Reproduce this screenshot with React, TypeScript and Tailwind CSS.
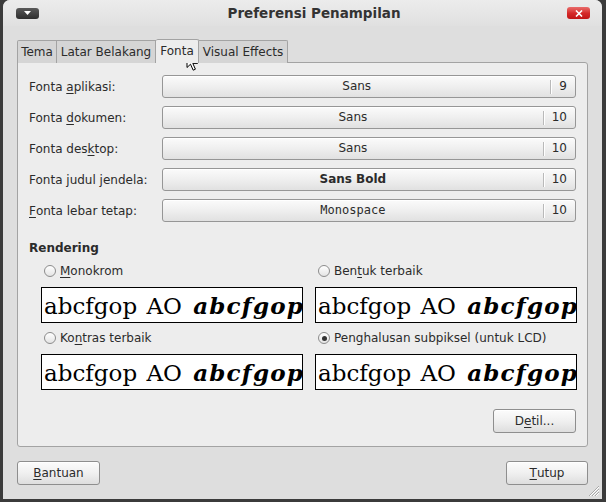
import React from "react";

const sans = "font-['DejaVu_Sans','Liberation_Sans',sans-serif]";

function U({ children }: { children: React.ReactNode }) {
  return <span className="underline decoration-1 underline-offset-[2px]">{children}</span>;
}

function GtkButton({ className = "", children }: { className?: string; children: React.ReactNode }) {
  return (
    <div
      className={`flex items-center justify-center h-[24px] rounded-[3px] border border-[#8e8e8e] bg-gradient-to-b from-[#fcfcfc] via-[#f0f0f0] to-[#dedede] shadow-[inset_0_1px_0_#ffffff] text-[12px] text-[#2b2b2b] ${className}`}
    >
      {children}
    </div>
  );
}

function FontButton({ name, size, nameClass = "" }: { name: string; size: string; nameClass?: string }) {
  return (
    <div className="flex items-center h-[23px] rounded-[3px] border border-[#969696] bg-gradient-to-b from-[#fbfbfb] via-[#efefef] to-[#e1e1e1] shadow-[inset_0_1px_0_#ffffff] text-[12px] text-[#2b2b2b]">
      <div className={`flex-1 text-center leading-[15px] ${nameClass}`}>{name}</div>
      <div className="w-px h-[14px] bg-[#b9b9b9] shadow-[1px_0_0_#ffffff]" />
      <div className="pl-[8px] pr-[8px] leading-[15px]">{size}</div>
    </div>
  );
}

function Radio({ checked = false }: { checked?: boolean }) {
  return (
    <div className="w-[12px] h-[12px] rounded-full border border-[#8c8c8c] bg-gradient-to-b from-[#ffffff] to-[#e4e4e4] flex items-center justify-center">
      {checked && <div className="w-[5px] h-[5px] rounded-full bg-[#333333]" />}
    </div>
  );
}

function Preview() {
  return (
    <div className="h-[36px] border border-black bg-white overflow-hidden whitespace-nowrap pl-[2px] pt-[3px] font-['DejaVu_Serif','Liberation_Serif',serif] text-[23px] leading-[30px] text-black">
      abcfgop <span className="ml-[2px]">AO</span>{" "}
      <span className="ml-[4px] italic font-bold tracking-[1.2px]">abcfgop</span>
    </div>
  );
}

function RadioOption({ label, checked = false }: { label: React.ReactNode; checked?: boolean }) {
  return (
    <div className="flex flex-col">
      <div className="h-[18px] flex items-center pl-[3px] gap-[4px] text-[12px] text-[#2b2b2b]">
        <Radio checked={checked} />
        <span className="leading-[15px]">{label}</span>
      </div>
      <div className="mt-[7px]">
        <Preview />
      </div>
    </div>
  );
}

export default function App() {
  return (
    <div className={`relative w-[606px] h-[502px] bg-[#3b3b3b] pl-[3px] pr-[4px] pb-[3px] flex ${sans}`}>
      <div className="flex-1 flex flex-col rounded-t-[7px] bg-[#dedede] overflow-hidden relative">
        {/* title bar */}
        <div className="h-[26px] flex items-center bg-gradient-to-b from-[#ececec] to-[#e0e0e0] shrink-0">
          <div className="ml-[13px] w-[23px] h-[11px] rounded-[3px] bg-gradient-to-b from-[#5a5a5a] to-[#2e2e2e] flex items-center justify-center">
            <svg width="7" height="4" viewBox="0 0 7 4">
              <path d="M0 0 L7 0 L3.5 4 Z" fill="#ffffff" />
            </svg>
          </div>
          <div className="flex-1 text-center pl-[22px] text-[13.5px] font-bold text-[#333333] leading-[16px]">
            Preferensi Penampilan
          </div>
          <div className="mr-[12px] w-[23px] h-[12px] rounded-[3px] bg-gradient-to-b from-[#e86a6a] via-[#d62a2a] to-[#c11414] flex items-center justify-center">
            <svg width="8" height="7" viewBox="0 0 8 7">
              <path d="M1 0.5 L7 6.5 M7 0.5 L1 6.5" stroke="#ffffff" strokeWidth="1.6" />
            </svg>
          </div>
        </div>

        {/* body */}
        <div className="flex-1 flex flex-col px-[14px] pt-[13px]">
          {/* tabs */}
          <div className="flex items-end h-[24px] text-[12px] text-[#2b2b2b] relative z-10 -mb-px">
            <div className="w-[40px] h-[23px] border border-b-0 border-[#a3a3a3] bg-[#d5d5d5] rounded-tl-[2px] flex items-center justify-center leading-[15px]">
              Tema
            </div>
            <div className="w-[99px] h-[23px] border border-b-0 border-l-0 border-[#a3a3a3] bg-[#d5d5d5] flex items-center justify-center leading-[15px]">
              Latar Belakang
            </div>
            <div className="w-[43px] h-[24px] border border-b-0 border-l-0 border-[#a3a3a3] bg-[#ededed] rounded-t-[2px] flex items-center justify-center pb-[1px] leading-[15px]">
              Fonta
            </div>
            <div className="w-[89px] h-[23px] border border-b-0 border-l-0 border-[#a3a3a3] bg-[#d5d5d5] rounded-tr-[2px] flex items-center justify-center leading-[15px]">
              Visual Effects
            </div>
          </div>

          {/* panel */}
          <div className="flex-1 flex flex-col border border-[#a3a3a3] rounded-b-[3px] rounded-tr-[3px] bg-[#ededed] pt-[12px] pl-[11px] pr-[11px] pb-[13px]">
            <div className="grid grid-cols-[133px_1fr] gap-y-[8px] text-[12px] text-[#2b2b2b]">
              <div className="flex items-center h-[23px] leading-[15px] pt-[1px]">
                Fonta&nbsp;<U>a</U>plikasi:
              </div>
              <FontButton name="Sans" size="9" />
              <div className="flex items-center h-[23px] leading-[15px] pt-[1px]">
                Fonta&nbsp;<U>d</U>okumen:
              </div>
              <FontButton name="Sans" size="10" />
              <div className="flex items-center h-[23px] leading-[15px] pt-[1px]">
                Fonta&nbsp;des<U>k</U>top:
              </div>
              <FontButton name="Sans" size="10" />
              <div className="flex items-center h-[23px] leading-[15px] pt-[1px]">Fonta judul jendela:</div>
              <FontButton name="Sans Bold" size="10" nameClass="font-bold" />
              <div className="flex items-center h-[23px] leading-[15px] pt-[1px]">
                <U>F</U>onta lebar tetap:
              </div>
              <FontButton
                name="Monospace"
                size="10"
                nameClass="font-['DejaVu_Sans_Mono','Liberation_Mono',monospace]"
              />
            </div>

            <div className="mt-[19px] text-[12px] font-bold leading-[15px] text-[#2b2b2b]">Rendering</div>

            <div className="mt-[6px] ml-[12px] mr-[-1px] grid grid-cols-2 gap-x-[12px] gap-y-[6px]">
              <RadioOption label={<><U>M</U>onokrom</>} />
              <RadioOption label={<>Ben<U>t</U>uk terbaik</>} />
              <RadioOption label={<>Ko<U>n</U>tras terbaik</>} />
              <RadioOption checked label={<>Penghalusan subpiksel (untuk LCD)</>} />
            </div>

            <div className="mt-auto flex justify-end">
              <GtkButton className="w-[83px]">
                D<U>e</U>til...
              </GtkButton>
            </div>
          </div>

          {/* bottom buttons */}
          <div className="flex justify-between pt-[14px] pb-[14px]">
            <GtkButton className="w-[83px]">
              <U>B</U>antuan
            </GtkButton>
            <GtkButton className="w-[82px]">
              <U>T</U>utup
            </GtkButton>
          </div>
        </div>

        {/* resize grip */}
        <svg className="absolute right-[2px] bottom-[2px]" width="12" height="12" viewBox="0 0 12 12">
          <path d="M11 1 L1 11 M11 4 L4 11 M11 7 L7 11" stroke="#a8a8a8" strokeWidth="1" />
          <path d="M11 2 L2 11 M11 5 L5 11 M11 8 L8 11" stroke="#ffffff" strokeWidth="1" />
        </svg>
      </div>

      {/* mouse cursor */}
      <svg className="absolute left-[186px] top-[52px]" width="14" height="20" viewBox="0 0 14 20">
        <path
          d="M1 1 L1 15.5 L4.5 12.2 L7.2 18.2 L9.4 17.2 L6.8 11.4 L11.5 11.4 Z"
          fill="#ffffff"
          stroke="#000000"
          strokeWidth="1"
          strokeLinejoin="round"
        />
      </svg>
    </div>
  );
}
